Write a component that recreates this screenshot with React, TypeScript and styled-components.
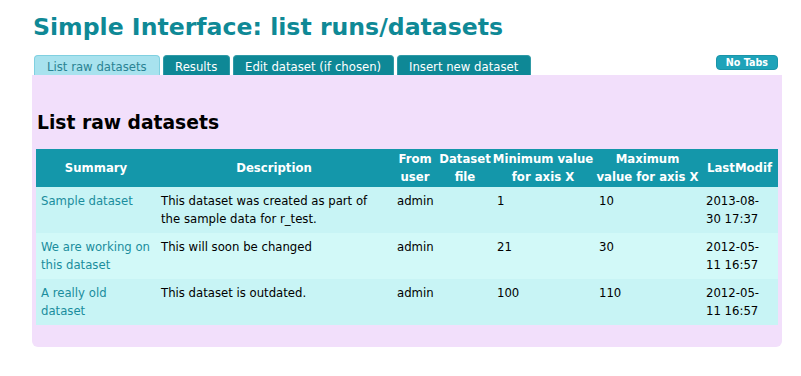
import React from "react";
import styled, { createGlobalStyle } from "styled-components";

type Row = {
  summary: string;
  description: string;
  user: string;
  file: string;
  min: string;
  max: string;
  modified: string;
};

const rows: Row[] = [
  {
    summary: "Sample dataset",
    description: "This dataset was created as part of the sample data for r_test.",
    user: "admin",
    file: "",
    min: "1",
    max: "10",
    modified: "2013-08-30 17:37",
  },
  {
    summary: "We are working on this dataset",
    description: "This will soon be changed",
    user: "admin",
    file: "",
    min: "21",
    max: "30",
    modified: "2012-05-11 16:57",
  },
  {
    summary: "A really old dataset",
    description: "This dataset is outdated.",
    user: "admin",
    file: "",
    min: "100",
    max: "110",
    modified: "2012-05-11 16:57",
  },
];

const tabs = ["List raw datasets", "Results", "Edit dataset (if chosen)", "Insert new dataset"];

// header labels keep the line breaks seen on the page
const columns = [
  { label: "Summary", width: 120 },
  { label: "Description", width: 236 },
  { label: "From\nuser", width: 46 },
  { label: "Dataset\nfile", width: 54 },
  { label: "Minimum value\nfor axis X", width: 102 },
  { label: "Maximum\nvalue for axis X", width: 107 },
  { label: "LastModif", width: 77 },
];

function App() {
  return (
    <>
      <GlobalStyle />
      <StPage>
        <StTitle>Simple Interface: list runs/datasets</StTitle>
        <StTabBar>
          {tabs.map((tab, i) => (
            <StTab key={tab} $active={i === 0}>
              {tab}
            </StTab>
          ))}
          <StNoTabs>No Tabs</StNoTabs>
        </StTabBar>
        <StPanel>
          <StHeading>List raw datasets</StHeading>
          <StTable>
            <colgroup>
              {columns.map((c) => (
                <col key={c.label} style={{ width: c.width }} />
              ))}
            </colgroup>
            <thead>
              <tr>
                {columns.map((c) => (
                  <StTh key={c.label}>{c.label}</StTh>
                ))}
              </tr>
            </thead>
            <tbody>
              {rows.map((r, i) => (
                <StRow key={r.summary} $even={i % 2 === 1}>
                  <StTd>
                    <StLink href="#">{r.summary}</StLink>
                  </StTd>
                  <StTd>{r.description}</StTd>
                  <StTd>{r.user}</StTd>
                  <StTd>{r.file}</StTd>
                  <StTd>{r.min}</StTd>
                  <StTd>{r.max}</StTd>
                  <StDateTd>{r.modified}</StDateTd>
                </StRow>
              ))}
            </tbody>
          </StTable>
        </StPanel>
      </StPage>
    </>
  );
}

export default App;

const GlobalStyle = createGlobalStyle`
  body {
    margin: 0;
    background: #ffffff;
    font-family: "DejaVu Sans", Verdana, sans-serif;
    font-size: 11.7px;
    color: #000;
  }
`;

const StPage = styled.div`
  width: 750px;
  padding: 13px 0 0 32px;
`;

const StTitle = styled.h1`
  margin: 0 0 14px 1px;
  font-size: 23.6px;
  line-height: 28px;
  font-weight: bold;
  color: #0f8996;
`;

const StTabBar = styled.div`
  display: flex;
  align-items: flex-start;
  gap: 3px;
  padding-left: 2px;
  height: 20px;
`;

const StTab = styled.div<{ $active: boolean }>`
  box-sizing: border-box;
  height: 20px;
  padding: 3px ${(p) => (p.$active ? "12px" : "11.4px")} 0;
  line-height: 16px;
  font-size: 11.7px;
  white-space: nowrap;
  border: 1px solid ${(p) => (p.$active ? "#80d0e0" : "#2f9aa6")};
  border-bottom: none;
  border-radius: 4px 4px 0 0;
  background: ${(p) => (p.$active ? "#a8e2ee" : "#0e8896")};
  color: ${(p) => (p.$active ? "#2a8393" : "#ffffff")};
  cursor: pointer;
`;

const StNoTabs = styled.button`
  margin-left: auto;
  margin-right: 4px;
  height: 15px;
  padding: 0 9px;
  border: 1px solid #1a95a9;
  border-radius: 4px;
  background: #1ea3b9;
  color: #ffffff;
  font-family: "DejaVu Sans", Verdana, sans-serif;
  font-size: 9.6px;
  font-weight: bold;
  line-height: 13px;
  cursor: pointer;
`;

const StPanel = styled.div`
  background: #f2dffb;
  padding: 37px 4px 22px;
  border-radius: 0 0 6px 6px;
`;

const StHeading = styled.h2`
  margin: 0 0 15px 1px;
  font-size: 18.72px;
  line-height: 22px;
  font-weight: bold;
  color: #000;
`;

const StTable = styled.table`
  width: 742px;
  table-layout: fixed;
  border-collapse: collapse;
`;

const StTh = styled.th`
  padding: 1px 0;
  background: #1497aa;
  color: #ffffff;
  font-weight: bold;
  font-size: 11.7px;
  line-height: 18px;
  text-align: center;
  vertical-align: middle;
  white-space: pre-line;
`;

const StRow = styled.tr<{ $even: boolean }>`
  background: ${(p) => (p.$even ? "#d2f9f8" : "#c8f4f5")};
`;

const StTd = styled.td`
  padding: 5px 3px 5px 5px;
  font-size: 11.7px;
  line-height: 18px;
  vertical-align: top;
  text-align: left;
`;

const StDateTd = styled(StTd)`
  padding-right: 10px;
`;

const StLink = styled.a`
  color: #1a8d9d;
  text-decoration: none;
`;
